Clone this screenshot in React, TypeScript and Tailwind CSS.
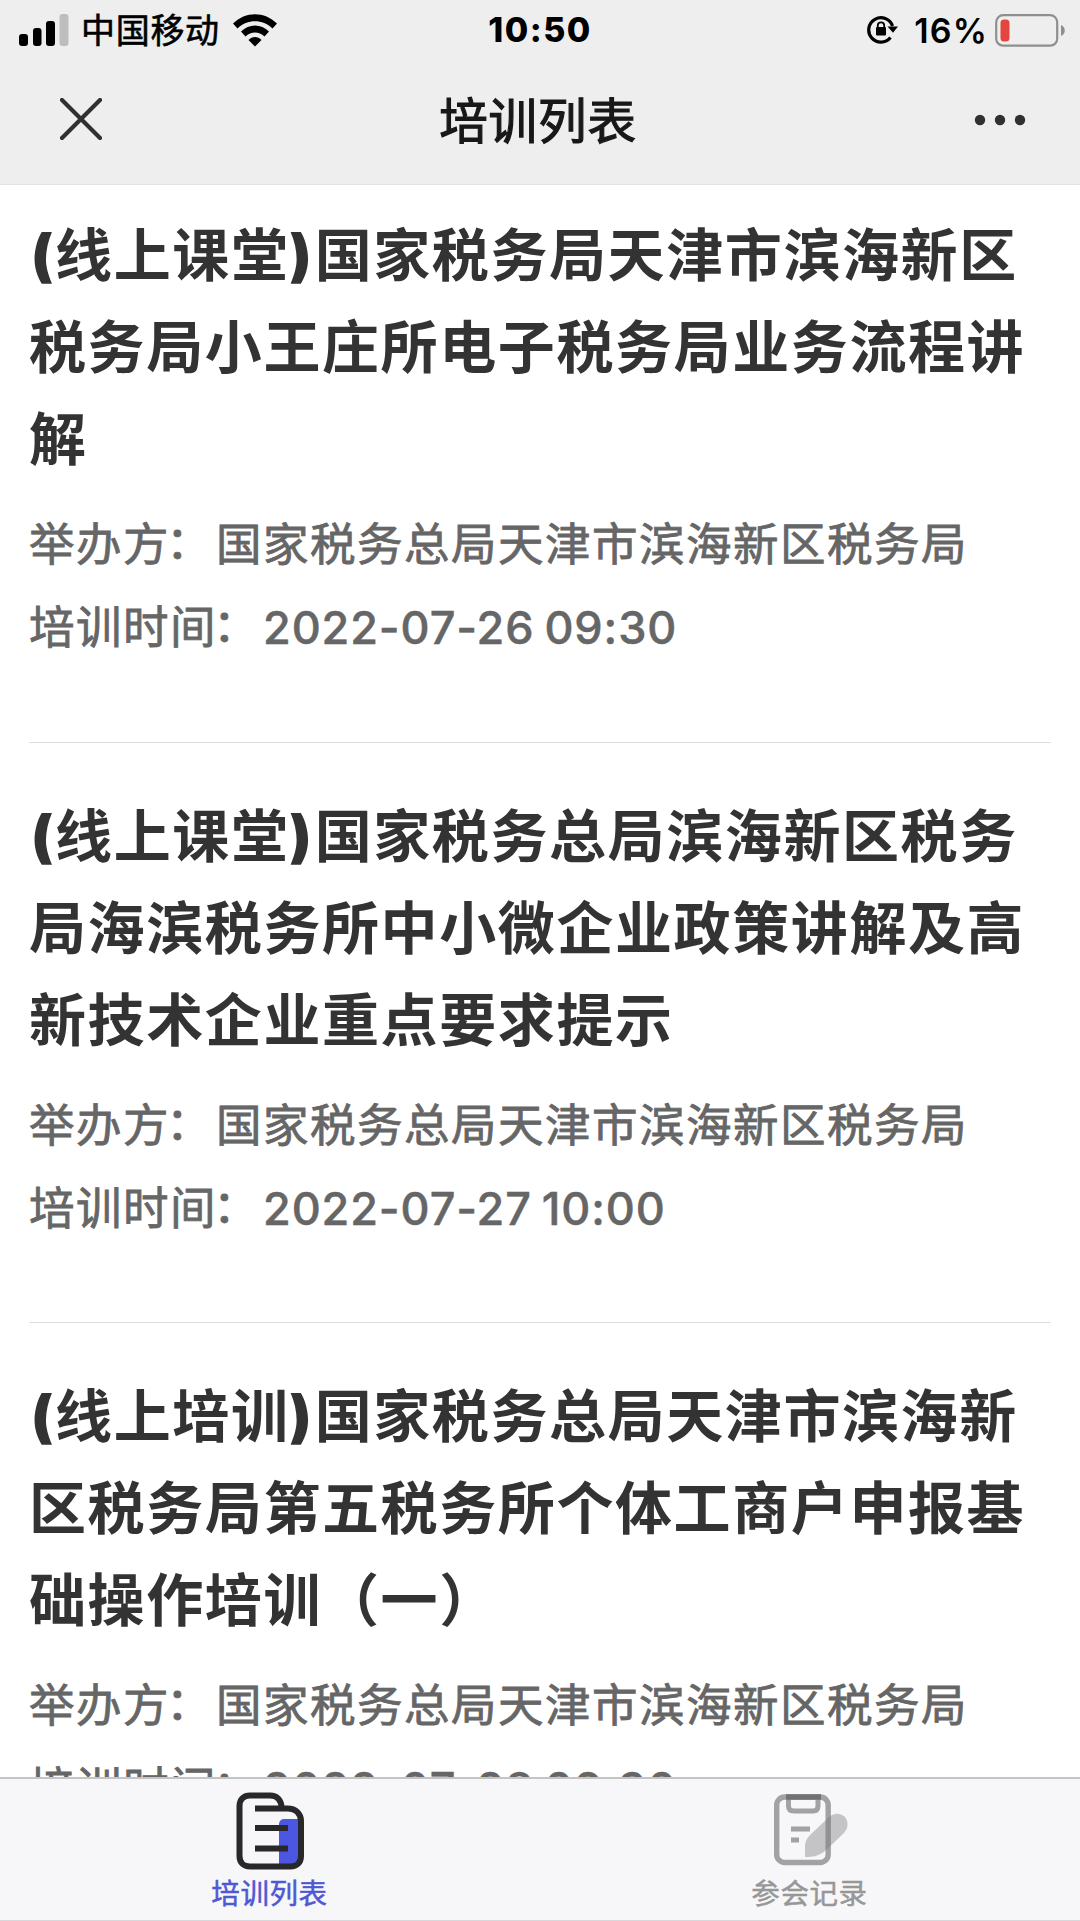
type Training = {
  id: number;
  tag: string;
  title: string;
  organizer: string;
  time: string;
};

const trainings: Training[] = [
  {
    id: 1,
    tag: "线上课堂",
    title: "国家税务局天津市滨海新区税务局小王庄所电子税务局业务流程讲解",
    organizer: "国家税务总局天津市滨海新区税务局",
    time: "2022-07-26 09:30",
  },
  {
    id: 2,
    tag: "线上课堂",
    title: "国家税务总局滨海新区税务局海滨税务所中小微企业政策讲解及高新技术企业重点要求提示",
    organizer: "国家税务总局天津市滨海新区税务局",
    time: "2022-07-27 10:00",
  },
  {
    id: 3,
    tag: "线上培训",
    title: "国家税务总局天津市滨海新区税务局第五税务所个体工商户申报基础操作培训（一）",
    organizer: "国家税务总局天津市滨海新区税务局",
    time: "2022-07-28 09:30",
  },
];

function StatusBar() {
  return (
    <div className="flex h-[60px] items-center justify-between pr-[15px] pl-[19px] text-black">
      <div className="flex w-[380px] items-center">
        <svg width="50" height="32" viewBox="0 0 50 32">
          <rect x="0" y="20" width="9" height="12" rx="3" />
          <rect x="14" y="14" width="8.500" height="18" rx="3" />
          <rect x="27" y="7" width="9" height="25" rx="3" />
          <rect x="40.500" y="0" width="9" height="32" rx="3" fill="#bdbdbd" />
        </svg>
        <span className="ml-[12px] pt-[2px] text-[34px] leading-[58px] tracking-[0.7px] [-webkit-text-stroke:0.6px_#000]">中国移动</span>
        <svg className="ml-[13px]" width="44" height="33" viewBox="0 0 44 33">
          <path d="M0 9.500C12.500-3 31.500-3 44 9.500L39.500 14.500C29.500 4.800 14.500 4.800 4.500 14.500Z" />
          <path d="M8 17.500C16 9.500 28 9.500 36 17.500L31.500 22.500C26 17.300 18 17.300 12.500 22.500Z" />
          <path d="M15.500 26C19 22 25 22 28.500 26L22 32.500Z" />
        </svg>
      </div>
      <span className="-ml-[4px] text-[34px] leading-[60px] font-extrabold tracking-[1.500px]">10:50</span>
      <div className="flex w-[380px] items-center justify-end">
        <svg className="mr-[15px]" width="32" height="30" viewBox="0 0 32 30">
          <path d="M23.500 22.500A12.200 12.200 0 1 1 25.500 11" fill="none" stroke="#000" strokeWidth="3.200" />
          <path d="M20.500 11.500H31L26 17.800Z" />
          <path d="M10.800 13V10.500a3.200 3.200 0 0 1 6.400 0V13" fill="none" stroke="#000" strokeWidth="1.800" />
          <rect x="9" y="12" width="10" height="8.500" rx="1" />
        </svg>
        <span className="mr-[7px] pt-[1px] text-[34px] leading-[59px] font-semibold tracking-[1.200px]">16%</span>
        <svg width="70" height="33" viewBox="0 0 70 33">
          <rect x="1.200" y="1.200" width="61" height="30.500" rx="7" fill="none" stroke="#8f8f8f" strokeWidth="2.200" />
          <rect x="5.500" y="5.500" width="9" height="22" rx="3.500" fill="#e2463f" />
          <path d="M66 11C71 13 71 20 66 22Z" fill="#8f8f8f" />
        </svg>
      </div>
    </div>
  );
}

function TitleBar() {
  return (
    <div className="flex h-[124px] items-start justify-between pr-[54px] pl-[60px]">
      <svg className="mt-[38px]" width="42" height="42" viewBox="0 0 42 42">
        <path d="M2 2L40 40M40 2L2 40" stroke="#303030" strokeWidth="4.200" strokeLinecap="round" />
      </svg>
      <h1 className="pt-[2px] text-[48.500px] leading-[120px] tracking-[0.9px] text-[#181818] [-webkit-text-stroke:1.2px_#181818]">培训列表</h1>
      <svg className="mt-[54px]" width="52" height="12" viewBox="0 0 52 12">
        <circle cx="6" cy="6" r="5.200" fill="#303030" />
        <circle cx="26" cy="6" r="5.200" fill="#303030" />
        <circle cx="46" cy="6" r="5.200" fill="#303030" />
      </svg>
    </div>
  );
}

function Colon() {
  return <span className="-ml-[4px] mr-[3px] align-[2px] leading-none">：</span>;
}

function TrainingCard({ training }: { training: Training }) {
  return (
    <li className="mx-[29px] h-[580.500px] shrink-0 border-b border-[#dedede] pt-[48px]">
      <h2 className="text-[57px] leading-[92px] font-bold tracking-[1.600px] break-all text-[#333333]">
        <span className="ml-[2px] font-black tracking-[2px]">(</span>
        {training.tag}
        <span className="font-black tracking-[3px]">)</span>
        {training.title}
      </h2>
      <div className="mt-[17px] text-[45.500px] leading-[83px] tracking-[1.500px] text-[#666666] [-webkit-text-stroke:0.8px_#666666]">
        <p className="h-[83px] whitespace-nowrap">
          举办方
          <Colon />
          {training.organizer}
        </p>
        <p className="h-[83px] whitespace-nowrap">
          培训时间
          <Colon />
          <span className="text-[45px] font-medium tracking-[0.9px] [word-spacing:-3px] [-webkit-text-stroke:0.5px_#666666]">
            {training.time}
          </span>
        </p>
      </div>
    </li>
  );
}

function ListIcon() {
  return (
    <svg width="70" height="78" viewBox="0 0 70 78">
      <path d="M43 73V32a5 5 0 0 1 5-5h15V73Z" fill="#4b57e0" />
      <path d="M19 16.500H51.500C60 16.500 65 22 65 29V64C65 70.500 61 74.500 54.500 74.500H14C7.500 74.500 3.500 70.500 3.500 64V14C3.500 7 8 3.500 14 3.500H34C41 3.500 45.500 8 45.500 16" fill="none" stroke="#28282a" strokeWidth="6" />
      <path d="M19 36H52M19 56.500H52" stroke="#28282a" strokeWidth="6" />
    </svg>
  );
}

function RecordIcon() {
  return (
    <svg width="74" height="74" viewBox="0 0 74 74">
      <rect x="2.700" y="4" width="51.500" height="65.500" rx="8" fill="none" stroke="#a2a2a3" strokeWidth="5.400" />
      <path d="M14.500 4V13Q14.500 18 20 18H39Q44 18 44 13V4" fill="none" stroke="#a2a2a3" strokeWidth="5" />
      <path d="M12 4H47" stroke="#717173" strokeWidth="5.400" />
      <path d="M17 36H36M17 47H25" stroke="#a2a2a3" strokeWidth="5" />
      <path d="M31 64V53C31 49 33 45 36 42L54 25C60 19 67 20 71 24C75 29 74 36 70 40L51 58C45 63 39 64 31 64Z" fill="#777779" fillOpacity="0.400" />
    </svg>
  );
}

function TabBar() {
  return (
    <nav className="grid h-[144px] shrink-0 grid-cols-2 border-t-2 border-b border-t-[#c4c4c6] border-b-[#d8d8da] bg-[#f7f7fa] text-[28.500px] leading-[36px] tracking-[0.6px]">
      <a className="flex flex-col items-center pt-[13px] text-[#4f58d2]">
        <div className="pl-[2px]">
          <ListIcon />
        </div>
        <span className="mt-[6px] mr-px [-webkit-text-stroke:0.5px_#4f58d2]">培训列表</span>
      </a>
      <a className="flex flex-col items-center pt-[14px] text-[#979798]">
        <div className="pl-[2px]">
          <RecordIcon />
        </div>
        <span className="mt-[9px] mr-px [-webkit-text-stroke:0.5px_#979798]">参会记录</span>
      </a>
    </nav>
  );
}

export default function App() {
  return (
    <div
      lang="zh-CN"
      className="flex h-[1921px] w-[1080px] flex-col overflow-hidden bg-white font-['Inter','Noto_Sans_CJK_SC',sans-serif]"
    >
      <header className="h-[185px] shrink-0 border-b border-[#e2e2e2] bg-[#eeeeee]">
        <StatusBar />
        <TitleBar />
      </header>
      <main className="min-h-0 flex-1 overflow-hidden">
        <ul className="-mt-[23px] flex flex-col">
          {trainings.map((training) => (
            <TrainingCard key={training.id} training={training} />
          ))}
        </ul>
      </main>
      <TabBar />
    </div>
  );
}
